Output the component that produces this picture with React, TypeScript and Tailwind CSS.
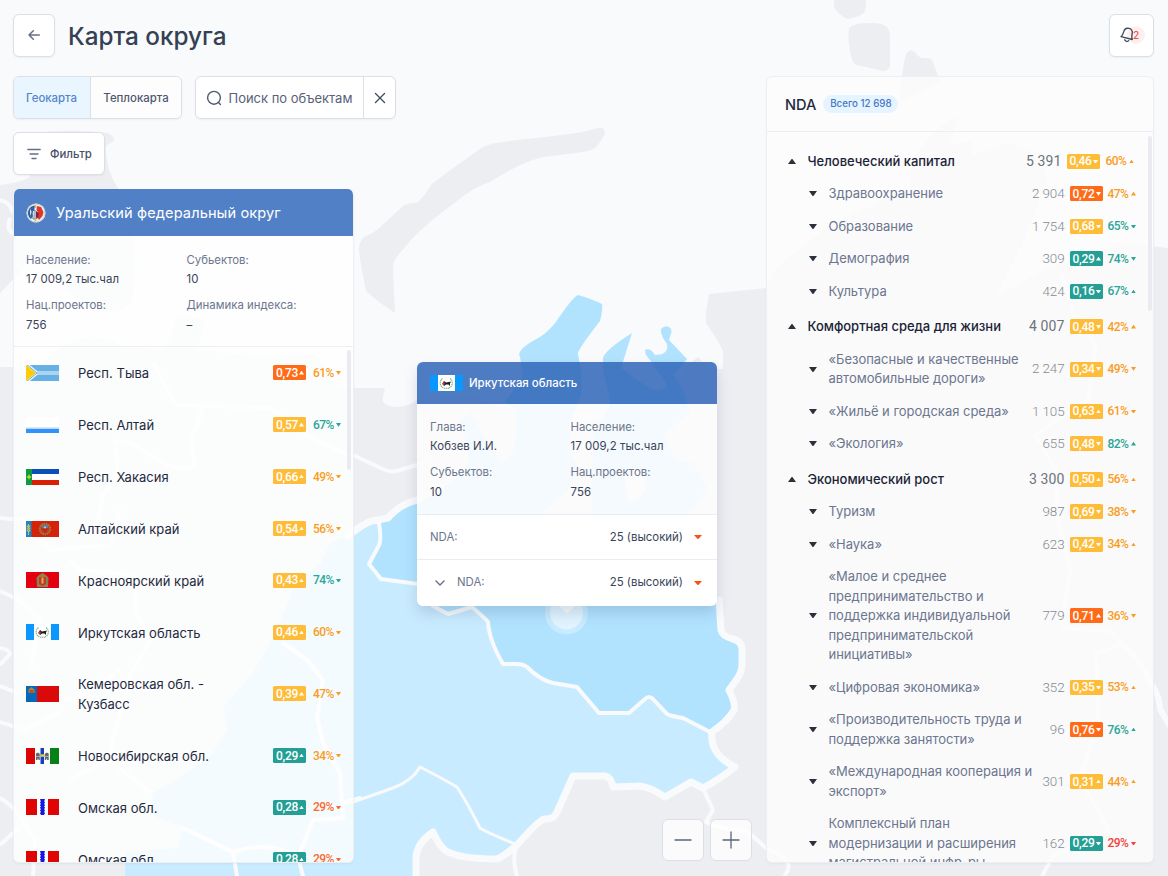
import React from "react";

type Tone = "red" | "amber" | "teal" | "orange" | "crimson";

const badgeBg: Record<string, string> = {
  red: "bg-[#ff6b18]",
  amber: "bg-[#ffbc38]",
  teal: "bg-[#239f96]",
};
const pctColor: Record<string, string> = {
  amber: "text-[#f99d22]",
  teal: "text-[#2ba598]",
  orange: "text-[#fb6a2b]",
  crimson: "text-[#f2443a]",
};

function Tri({ up, className }: { up: boolean; className?: string }) {
  return (
    <svg viewBox="0 0 10 6" preserveAspectRatio="none" className={className} fill="currentColor">
      {up ? <path d="M0 6 4.500 0h1L10 6z" /> : <path d="M0 0h10L5.500 6h-1z" />}
    </svg>
  );
}

function Metrics({ v, vt, vu, p, pt, pu }: { v: string; vt: Tone; vu: boolean; p: string; pt: Tone; pu: boolean }) {
  return (
    <>
      <span className={`flex h-[15px] w-[33px] shrink-0 items-center justify-between rounded-[1.500px] pl-[3px] pr-[2px] font-[Roboto] text-[12px] font-medium leading-none tracking-[-0.3px] text-white ${badgeBg[vt]}`}>
        {v}
        <Tri up={vu} className="h-[3.500px] w-[5px]" />
      </span>
      <span className={`flex h-[15px] w-[28px] shrink-0 items-center justify-between font-[Roboto] text-[12px] font-medium leading-none tracking-[-0.6px] ${pctColor[pt]}`}>
        {p}
        <Tri up={pu} className="h-[3.500px] w-[5px]" />
      </span>
    </>
  );
}

function IrkutskFlag() {
  return (
    <svg viewBox="0 0 33 16" className="block h-[16px] w-[33px]">
      <path fill="#fff" d="M0 0h33v16H0z" />
      <path fill="#0a98ff" d="M0 0h8v16H0zM25 0h8v16h-8z" />
      <path d="M12.500 3.500C9 6 9.500 11 13.500 13M20 3.500C23.500 6 23 11 19 13M14 13.200h5" fill="none" stroke="#77b781" strokeWidth="1.100" strokeDasharray="1.500 .5" />
      <path d="M12.500 8.500 14 6l2 1.500 3-.5 2-.5-1 2v2.500l-1.500-1.500h-2.500L14 11z" fill="#1c1c22" />
      <path d="m12 9 1.500-2 1.500 1-1 2.500z" fill="#d8323a" />
    </svg>
  );
}

function Flag({ id }: { id: string }) {
  if (id === "irk") return <IrkutskFlag />;
  return (
    <svg viewBox="0 0 33 16" className="block h-[16px] w-[33px]">
      {id === "tyva" && (
        <>
          <path fill="#65b0e4" d="M0 0h33v16H0z" />
          <path d="m0-1 11 9L0 17M11 8h22" fill="none" stroke="#f3f8fb" strokeWidth="3.200" />
          <path d="m0-1 11 9L0 17M11 8h22" fill="none" stroke="#65b0e4" strokeWidth="1" />
          <path fill="#ffcb05" d="M0 0v16l10-8z" />
        </>
      )}
      {id === "altai" && (
        <>
          <path fill="#fff" d="M0 0h33v16H0z" />
          <path fill="#b6d8fb" d="M0 10.500h33V12H0z" />
          <path fill="#3192fb" d="M0 12h33v4H0z" />
        </>
      )}
      {id === "khak" && (
        <>
          <path fill="#fff" d="M0 0h33v16H0z" />
          <path fill="#0b50b8" d="M6 0h27v5H6z" />
          <path fill="#d81e05" d="M6 11h27v5H6z" />
          <path fill="#109a44" d="M0 0h6v16H0z" />
          <path fill="#b7d929" d="m3 5 .8 1.800L5.700 8l-1.900 1.200L3 11l-.8-1.800L.3 8l1.900-1.200z" />
        </>
      )}
      {id === "altk" && (
        <>
          <path fill="#d52209" d="M0 0h33v16H0z" />
          <path fill="#1c83c8" d="M0 0h5.500v16H0z" />
          <path d="M2.500 3v11M1.300 4.500v6M3.700 4.500v6" stroke="#d9cb4c" strokeWidth="1.100" strokeDasharray="1.800 .5" />
          <circle cx="19" cy="8" r="5.300" fill="#c63a22" stroke="#8c8648" strokeWidth="1.800" strokeDasharray="1.600 .7" />
          <path fill="#5d7fa8" d="M16 4h6v3h-6z" />
          <path fill="#b8281b" d="M16 7.500h6L19 12z" />
          <circle cx="19" cy="6.500" r="1.100" fill="#d7c2ad" />
        </>
      )}
      {id === "krsn" && (
        <>
          <path fill="#e3000f" d="M0 0h33v16H0z" />
          <path fill="#8f8741" d="M10.500 6 12 4l2-1.500L16.500 1 19 2.500 21 4l1.500 2-.5 9h-11z" />
          <path fill="#c7362c" d="M13 5h7v7l-3.500 2-3.500-2z" />
          <path fill="#d9b348" d="M15.500 5.500h2v6h-2z" />
          <path d="M11.500 7v6M21.500 7v6M13 14.700h7" stroke="#4689a8" strokeWidth="1" strokeDasharray="1.300 1" />
        </>
      )}
      {id === "kem" && (
        <>
          <path fill="#db0a0a" d="M0 0h33v16H0z" />
          <path fill="#0668b8" d="M0 0h11v16H0z" />
          <path fill="#9b8a48" d="M2.500 3.500 5.500 1l3 2.500V7h-6z" />
          <path fill="#d2451e" d="M3.500 4h4v3h-4z" />
        </>
      )}
      {id === "nov" && (
        <>
          <path fill="#fff" d="M0 0h33v16H0z" />
          <path fill="#dc0505" d="M0 0h9v16H0z" />
          <path fill="#078015" d="M24 0h9v16h-9z" />
          <path fill="#1540b7" d="M14.500 0H18v16h-3.500z" />
          <path fill="#62686b" d="M10 5.500 12 4.500 13.800 6v6h-1.300l-.5-2-.7 2H10zM22.700 5.500l-2-1L18.800 6v6h1.300l.5-2 .7 2h1.400z" />
          <path d="M10 8.500h13" stroke="#b9bec4" strokeWidth=".8" />
          <path fill="#e4c742" d="M14.500 6.300h4v2h-4z" />
        </>
      )}
      {id === "omsk" && (
        <>
          <path fill="#fff" d="M0 0h33v16H0z" />
          <path fill="#e00505" d="M0 0h11v16H0zM22 0h11v16H22z" />
          <path d="M16.500 0v16" stroke="#1715e8" strokeWidth="3.400" />
          <path d="M16.500 0v16" stroke="#1715e8" strokeWidth="4.600" strokeDasharray="1.500 1.200" />
        </>
      )}
    </svg>
  );
}

const regions: { f: string; n: string; v: string; vt: Tone; p: string; pt: Tone }[] = [
  { f: "tyva", n: "Респ. Тыва", v: "0,73", vt: "red", p: "61%", pt: "amber" },
  { f: "altai", n: "Респ. Алтай", v: "0,57", vt: "amber", p: "67%", pt: "teal" },
  { f: "khak", n: "Респ. Хакасия", v: "0,66", vt: "amber", p: "49%", pt: "amber" },
  { f: "altk", n: "Алтайский край", v: "0,54", vt: "amber", p: "56%", pt: "amber" },
  { f: "krsn", n: "Красноярский край", v: "0,43", vt: "amber", p: "74%", pt: "teal" },
  { f: "irk", n: "Иркутская область", v: "0,46", vt: "amber", p: "60%", pt: "amber" },
  { f: "kem", n: "Кемеровская обл. -\nКузбасс", v: "0,39", vt: "amber", p: "47%", pt: "amber" },
  { f: "nov", n: "Новосибирская обл.", v: "0,29", vt: "teal", p: "34%", pt: "amber" },
  { f: "omsk", n: "Омская обл.", v: "0,28", vt: "teal", p: "29%", pt: "orange" },
  { f: "omsk", n: "Омская обл.", v: "0,28", vt: "teal", p: "29%", pt: "orange" },
];

type Row = [string, string, string, Tone, boolean, string, Tone, boolean];
const groups: { head: Row; items: Row[] }[] = [
  {
    head: ["Человеческий капитал", "5 391", "0,46", "amber", false, "60%", "amber", true],
    items: [
      ["Здравоохранение", "2 904", "0,72", "red", false, "47%", "amber", true],
      ["Образование", "1 754", "0,68", "amber", false, "65%", "teal", false],
      ["Демография", "309", "0,29", "teal", true, "74%", "teal", false],
      ["Культура", "424", "0,16", "teal", false, "67%", "teal", true],
    ],
  },
  {
    head: ["Комфортная среда для жизни", "4 007", "0,48", "amber", false, "42%", "amber", true],
    items: [
      ["«Безопасные и качественные\nавтомобильные дороги»", "2 247", "0,34", "amber", false, "49%", "amber", false],
      ["«Жильё и городская среда»", "1 105", "0,63", "amber", true, "61%", "amber", false],
      ["«Экология»", "655", "0,48", "amber", false, "82%", "teal", true],
    ],
  },
  {
    head: ["Экономический рост", "3 300", "0,50", "amber", true, "56%", "amber", true],
    items: [
      ["Туризм", "987", "0,69", "amber", false, "38%", "amber", false],
      ["«Наука»", "623", "0,42", "amber", false, "34%", "amber", true],
      ["«Малое и среднее\nпредпринимательство и\nподдержка индивидуальной\nпредпринимательской\nинициативы»", "779", "0,71", "red", true, "36%", "amber", false],
      ["«Цифровая экономика»", "352", "0,35", "amber", false, "53%", "amber", true],
      ["«Производительность труда и\nподдержка занятости»", "96", "0,76", "red", false, "76%", "teal", true],
      ["«Международная кооперация и\nэкспорт»", "301", "0,31", "amber", true, "44%", "amber", true],
      ["Комплексный план\nмодернизации и расширения\nмагистральной инфр-ры", "162", "0,29", "teal", false, "29%", "crimson", false],
    ],
  },
];

function GroupHead({ r, first }: { r: Row; first: boolean }) {
  return (
    <div className="flex h-[32.5px] items-center">
      <Tri up className="ml-[20.500px] h-[5px] w-[8px] text-[#2b3138]" />
      <span className="ml-[12px] whitespace-nowrap text-[13px] font-medium tracking-[-0.02px] text-[#1b2336]">{r[0]}</span>
      <span className="ml-auto mr-[5px] font-[Roboto] text-[14px] tracking-[0.1px] text-[#6d737d]">{r[1]}</span>
      <span className={`flex ${first ? "mr-[19.500px] gap-[6px]" : "mr-[17.500px] gap-[5px]"}`}>
        <Metrics v={r[2]} vt={r[3]} vu={r[4]} p={r[5]} pt={r[6]} pu={r[7]} />
      </span>
    </div>
  );
}

function GroupItem({ r }: { r: Row }) {
  return (
    <div className="flex items-center py-[6.5px]">
      <Tri up={false} className="ml-[41.500px] h-[5px] w-[8px] text-[#2b3138]" />
      <span className="ml-[12px] whitespace-pre text-[13px] leading-[19.5px] tracking-[-0.02px] text-[#6c768e]">{r[0]}</span>
      <span className="ml-auto mr-[5px] font-[Roboto] text-[13.400px] font-light leading-none tracking-[-0.1px] text-[#858b94]">{r[1]}</span>
      <span className="mr-[17.500px] flex gap-[5px]">
        <Metrics v={r[2]} vt={r[3]} vu={r[4]} p={r[5]} pt={r[6]} pu={r[7]} />
      </span>
    </div>
  );
}

function Field({ label, value }: { label: string; value: string }) {
  return (
    <div className="text-[11.4px] leading-[19.5px]">
      <div className="text-[#6c768e]">{label}</div>
      <div className="tracking-[0.06px] text-[#3a4459]">{value}</div>
    </div>
  );
}

function MapCanvas() {
  return (
    <svg viewBox="0 0 1168 876" className="absolute inset-0 h-full w-full" fill="none">
      <g fill="#edeef2">
        <path d="M395 313 Q378 302 366 291 Q360 262 359 250 Q359 241 365 236 Q372 234 377 230 L403 206 Q407 203 416 203 Q420 202 432 184 Q444 174 483 147 Q490 143 510 141 Q545 137 570 134 Q584 132 598 128 Q605 127 605 133 Q602 141 595 148 Q590 151 583 152 L552 156 Q540 157 527 162 Q507 171 490 182 Q475 187 462 197 L430 222 Q412 237 396 258 Q393 262 393 270 Z" />
        <path d="M834 0 Q833 7 836 10 Q843 17 847 19 Q857 18 864 13 Q866 8 866 0Z" />
        <path d="M849 28 Q853 23 870 23 Q890 22 890 36 L890 67 Q888 71 883 71 L857 65 Q853 64 852 59 Q847 42 849 28Z" />
        <path d="M906 54 Q910 48 915 52 Q919 59 925 58 Q932 58 933 62 L940 82 L900 102 Q901 73 906 54Z" />
        <path d="M0 185 Q20 183 30 177 V140 Q35 131 60 131 Q85 130 108 133 Q118 139 111 143 Q104 145 106 152 Q107 172 118 188 Q135 220 135 250 Q136 280 132 300 Q122 314 105 312 Q75 306 52 270 Q36 242 22 270 L0 293Z" />
        <path d="M14 367 Q26 378 40 365 Q54 350 75 340 Q100 332 120 345 L165 350 L178 315 L205 320 L198 350 L260 357 L316 354 L334 384 L353 388 H385 Q382 400 383 402 Q389 407 397 407 Q410 406 417 400 L470 395 L560 430 L660 400 L688 365 L698 357 L708 369 H723 V352 Q723 348 706 323 Q705 314 709 294 L766 288 L777 267 L827 227 L910 187 L912 160 Q938 123 957 117 L950 145 L973 140 L972 155 L1007 143 L1040 153 L1047 180 L1027 233 L997 295 L1050 267 L1127 243 L1168 248 V876 H0 V367Z" />
      </g>

      <g stroke="#f9fafc" strokeWidth="4" strokeLinejoin="round">
        <path d="M0 200 Q10 202 13 213 M10 218 Q5 232 16 234" />
        <path d="M353 455 L385 470 Q393 473 400 470 L430 461" />
        <path d="M153 362 L175 405 L270 408 L310 437 L353 457" />
        <path d="M203 408 L191 440 L195 466 Q178 473 158 460 Q132 440 115 441 L118 475 L103 495 L98 522" />
        <path d="M0 518 L22 520 L50 550 L110 545 L120 510" />
        <path d="M0 591 Q24 600 40 620 L30 670 M70 560 L80 570 L135 575 V610" />
        <path d="M0 648 Q10 650 10 654 L0 665 M0 686 L15 692 L75 700 L120 670 M0 722 L25 730 L60 712 M0 798 Q14 806 22 820 L35 840 L33 876 M22 825 L0 845" />
        <path d="M135 610 L150 640 L130 675 L118 720 L108 760 L70 780 M108 760 L152 793" />
        <path d="M703 788 L713 810 L706 822 Q718 829 747 831 L766 848 L782 856 Q794 865 784 876" />
        <path d="M1060 270 L1075 318 L1096 346 L1088 400 L1035 435 L1056 470 L1058 520 L1070 570 L1062 625" />
        <path d="M1062 628 L1110 631 L1122 644 L1096 654 L1098 720 L1080 780 L1098 810 L1108 830 L1053 856 L1042 876" />
        <path d="M1122 644 L1138 660 L1155 690 Q1160 700 1160 709 L1170 726" strokeWidth="6" />
        <path d="M517 845 Q511 858 518 880" />
      </g>

      <path
        d="M353 533 Q364 522 373 522 L385 520 L405 505 L430 500 L717 598 L720 634 Q740 638 742 647 Q743 665 738 679 L728 690 L734 710 L712 733 Q708 754 735 767 L703 788 L691 782 L664 797 L640 786 L613 787 L607 777 L573 776 L557 815 L542 820 L517 845 L497 859 L443 852 L432 832 L417 853 L415 876 H125 Q125 862 127 852 L177 848 L183 828 L150 814 L153 793 L187 773 L213 753 L227 730 L223 707 L253 673 L273 637 L287 605 L295 583 L320 565 L330 543Z"
        fill="#c9ebff"
      />
      <path
        d="M417 502 Q405 505 402 509 L390 520 L381 523 Q383 542 378 547 L370 564 L381 579 L418 584 L433 606 L448 614 L472 607 Q487 620 488 622 Q489 640 503 664 H517 Q523 664 527 667 Q540 680 553 683 L577 687 L599 713 H629 L645 699 Q649 695 653 699 L667 714 Q670 716 683 718 L712 733 L734 710 L728 690 L740 675 V647 L720 634 L717 598 L690 513 L707 488 L693 462 L677 462 L663 435 L690 412 L685 395 L674 375 L687 359 L669 340 Q672 333 670 328 Q665 325 661 329 Q660 335 667 344 Q669 355 655 355 Q650 347 645 350 Q645 355 650 360 L667 385 Q660 397 640 382 L621 368 L632 333 Q605 350 603 358 V370 L609 395 L610 405 L593 432 L592 513 L542 513 L570 488 L577 465 L570 452 V422 L581 395 L582 375 L578 354 Q576 352 600 321 Q603 309 602 304 Q592 299 578 295 Q574 296 560 316 Q551 330 540 337 Q515 350 520 357 L523 377 L505 402 L516 410 L517 438 L513 452 L502 463 L490 448 L470 412 L460 422 L468 445 V465 L453 482Z"
        fill="#b1e3ff"
      />
      <circle cx="666.500" cy="331.500" r="5" fill="#b1e3ff" />
      <path d="M623 468 Q640 465 646 480 Q646 500 628 501Z" fill="#f9fafc" />

      <g stroke="#f9fafc" strokeLinejoin="round" strokeLinecap="round">
        <path
          strokeWidth="4"
          d="M379 523 Q382 542 378 547 L369 564 L381 579 L418 584 L433 606 L448 614 L472 607 Q487 620 488 622 Q489 640 503 664 H517 Q523 664 527 667 Q540 680 553 683 L577 687 L599 713 H629 L645 699 Q649 695 653 699 L667 714 Q670 716 683 718 L712 733"
        />
        <path strokeWidth="3" d="M353 802 L393 788 Q412 781 420 767 Q440 777 457 787 Q468 804 480 828 Q486 832 515 844" />
        <path strokeWidth="4" d="M283 643 L307 660 L323 680 L317 717 L323 743 L340 773 L342 803 L360 798 M342 803 L343 818 L313 820 L298 857 L303 876 M183 828 L233 852 L237 876 M233 852 Q270 840 298 857" />
        <path
          strokeWidth="7"
          d="M348 536 Q364 523 372 521 L388 518 Q400 504 417 500 L440 488 M719 600 L721 630 Q722 636 733 639 Q742 641 742 650 V664 Q742 672 737 679 L729 690 Q736 704 734 710 Q728 721 712 732 Q709 754 735 767 Q720 779 703 788 L691 782 L665 797 Q650 787 640 786 L613 787 Q611 777 605 776 L573 776 L557 812 Q554 820 544 819 Q538 821 517 845 Q503 857 497 859 Q460 859 446 851 Q439 846 433 832 Q417 843 416 857 L416 880"
        />
      </g>

      <circle cx="566.500" cy="613" r="21.500" fill="#fff" fillOpacity=".3" />
      <circle cx="566.500" cy="613" r="16.500" fill="#fff" fillOpacity=".45" />
      <path d="M560 605h14v2l-7 6.500-7-6.500z" fill="#fafcfe" />
    </svg>
  );
}

const control = "border border-[#dcdfe6] bg-white shadow-[0_1px_2px_rgba(40,50,80,0.06)]";

export default function App() {
  return (
    <div className="relative flex h-[876px] w-[1168px] justify-between overflow-hidden bg-[#f9fafc] pl-[13px] pr-[14px] pt-[14px] font-['Inter',sans-serif] text-[#3a4459]">
      <MapCanvas />

      <div className="relative flex h-[849px] w-[384px] flex-col">
        <header className="flex h-[43px] items-center">
          <button className={`flex h-[43px] w-[42px] items-center justify-center rounded-[6px] pb-px ${control}`}>
            <svg viewBox="0 0 14 14" className="h-[14px] w-[14px]" fill="none" stroke="#667085" strokeWidth="1.500" strokeLinecap="round" strokeLinejoin="round">
              <path d="M12.300 7H2.300M6.300 2.700 2 7l4.300 4.300" />
            </svg>
          </button>
          <h1 className="ml-[13px] whitespace-nowrap pt-px text-[24.300px] font-medium leading-none text-[#344054]">Карта округа</h1>
        </header>

        <div className="mt-[19px] flex h-[43px] shrink-0 gap-[13px]">
          <div className={`flex w-[169px] overflow-hidden rounded-[6px] text-[11.4px] font-medium ${control}`}>
            <button className="w-[77px] border-r border-[#dcdfe6] bg-[#eaf6ff] pr-px pt-[2px] text-[#5485cc]">Геокарта</button>
            <button className="flex-1 bg-[#fdfdfe] pt-[2px] text-[#4f596e]">Теплокарта</button>
          </div>
          <div className={`flex w-[201px] items-center rounded-[6px] ${control}`}>
            <svg viewBox="0 0 16 16" className="ml-[10px] h-[16px] w-[16px]" fill="none" stroke="#4f596e" strokeWidth="1.400" strokeLinecap="round">
              <circle cx="8" cy="7.800" r="6.400" />
              <path d="m12.600 12.600 1.800 1.800" />
            </svg>
            <span className="ml-[6.500px] whitespace-nowrap pt-[2px] text-[13px] tracking-[-0.02px] text-[#576177]">Поиск по объектам</span>
            <button className="ml-auto flex h-full w-[32px] items-center justify-center border-l border-[#dcdfe6]">
              <svg viewBox="0 0 12 12" className="h-[12px] w-[12px]" stroke="#3f495f" strokeWidth="1.300" strokeLinecap="round">
                <path d="m1.500 1.500 9 9M10.500 1.500l-9 9" />
              </svg>
            </button>
          </div>
        </div>

        <button className={`mt-[13px] flex h-[43px] w-[92px] shrink-0 items-center rounded-[6px] ${control}`}>
          <svg viewBox="0 0 14 12" className="ml-[13px] h-[12px] w-[14px]" fill="none" stroke="#667085" strokeWidth="1.300" strokeLinecap="round">
            <path d="M.8 1.500h12.400M3 6h8M5 10.500h4" />
          </svg>
          <span className="ml-[9px] pt-[2px] text-[11.4px] font-medium text-[#475168]">Фильтр</span>
        </button>

        <section className="relative mt-[14px] flex h-[674px] w-[341px] shrink-0 flex-col overflow-hidden rounded-[6px] border border-t-0 border-[#eef0f4] bg-white/80 shadow-[0_1px_2px_rgba(40,50,80,0.06)]">
          <div className="-mx-px flex h-[47px] shrink-0 items-center bg-[#5280c6] pl-[13px]">
            <svg viewBox="0 0 20 20" className="h-[20px] w-[20px]">
              <circle cx="10" cy="10" r="9.500" fill="#eef0f4" />
              <path d="M9 2.500A7.500 7.500 0 0 0 5 16l2-3-1-3 2-2z" fill="#2a62ad" />
              <path d="M4 5 6 9l-2 5M6.500 8 9 7v9H7z" fill="#dfeaf5" stroke="#39608e" strokeWidth=".7" />
              <path d="M11 3 15 4l2.500 5-1 4-3.500 4-2-4 1.500-3-2-3z" fill="#e0362e" />
              <path d="m10 8 3 2-1 5-2 1z" fill="#7a2940" />
              <path d="M9.500 2v3M9.500 14v4" stroke="#d9b84d" strokeWidth="1.500" />
              <circle cx="10" cy="10" r="9" fill="none" stroke="#c9ccb9" strokeWidth=".8" />
            </svg>
            <span className="ml-[10px] whitespace-nowrap pt-[2px] text-[14.6px] tracking-[0.1px] text-white">Уральский федеральный округ</span>
          </div>
          <div className="grid h-[111px] shrink-0 grid-cols-[160.5px_1fr] content-start gap-y-[6.500px] border-b border-[#edeff3] pl-[12px] pt-[14.500px]">
            <Field label="Население:" value="17 009,2 тыс.чал" />
            <Field label="Субьектов:" value="10" />
            <Field label="Нац.проектов:" value="756" />
            <Field label="Динамика индекса:" value="–" />
          </div>
          <div className="min-h-0 flex-1 overflow-hidden">
            {regions.map((r, i) => (
              <div key={i} className="flex items-center py-[16.200px] pl-[12px] pr-[12px]">
                <Flag id={r.f} />
                <span className="-mb-px ml-[19px] whitespace-pre pt-px text-[13px] leading-[19.5px] tracking-[0.03px] text-[#1f2a40]">{r.n}</span>
                <span className="ml-auto flex gap-[7px]">
                  <Metrics v={r.v} vt={r.vt} vu p={r.p} pt={r.pt} pu={false} />
                </span>
              </div>
            ))}
          </div>
          <div className="absolute right-[2px] top-[161px] h-[120px] w-[4px] rounded-full bg-[#e9ebf0]" />
        </section>
      </div>

      <div className="relative flex w-[389px] flex-col items-end">
        <button className={`flex h-[43px] w-[45px] shrink-0 items-center rounded-[6px] pb-px ${control}`}>
          <span className="relative ml-[10px] flex h-[18px] w-[28px] items-center">
            <span className="absolute left-[7px] flex h-[18px] w-[18px] items-center justify-center rounded-full bg-[#feefef] text-[10px] font-medium text-[#f0524c]">2</span>
            <svg viewBox="0 0 16 16" className="relative h-[15.500px] w-[15.500px]" fill="none" stroke="#3f495f" strokeWidth="1.400" strokeLinecap="round" strokeLinejoin="round">
              <path d="M1 10C2.800 8.500 3.100 7.400 3.800 5.100 4.600 2.100 6.800.9 9.400 1.500c2.800.6 3.700 3 3.100 5.700-.5 2.200-.6 3.400.2 5.700z" />
              <path d="M4.800 13.200c.8 1.800 3 2.200 4.200.9" />
            </svg>
          </span>
        </button>

        <section className="relative mt-[19px] flex h-[787px] w-[388px] flex-col overflow-hidden rounded-[6px] border border-[#edeff3] bg-[#fdfdfd]/80 shadow-[0_1px_2px_rgba(40,50,80,0.05)]">
          <div className="flex h-[55px] shrink-0 items-center border-b border-[#edeff3] pl-[18px]">
            <span className="pt-[3px] text-[14.6px] font-medium text-[#1f2a40]">NDA</span>
            <span className="ml-[7px] flex h-[18px] w-[75px] items-center justify-center whitespace-nowrap rounded-full bg-[#e6f4ff] text-[9.750px] font-medium text-[#4677c4]">Всего 12 698</span>
          </div>
          <div className="min-h-0 flex-1 overflow-hidden pt-[13.200px]">
            {groups.map((g, i) => (
              <div key={i} className="mb-[3px]">
                <GroupHead r={g.head} first={i === 0} />
                {g.items.map((r) => (
                  <GroupItem key={r[0]} r={r} />
                ))}
              </div>
            ))}
          </div>
          <div className="absolute right-[1px] top-[59px] h-[175px] w-[4px] rounded-full bg-[#e9ebf0]" />
        </section>
      </div>

      <div className="absolute left-[417px] top-[362px] flex h-[244px] w-[300px] flex-col overflow-hidden rounded-[6px] shadow-[0_8px_14px_rgba(40,60,100,0.16)]">
        <div className="flex h-[42px] items-center bg-[#3065b8]/85 pl-[13px]">
          <IrkutskFlag />
          <span className="ml-[6px] pt-[2px] text-[11.4px] font-medium text-white">Иркутская область</span>
        </div>
        <div className="grid h-[111px] grid-cols-[140.5px_1fr] content-start gap-y-[6.500px] border-b border-[#e9ecf1] bg-[#fcfcfd]/90 pl-[13px] pt-[13.600px]">
          <Field label="Глава:" value="Кобзев И.И." />
          <Field label="Население:" value="17 009,2 тыс.чал" />
          <Field label="Субьектов:" value="10" />
          <Field label="Нац.проектов:" value="756" />
        </div>
        <div className="flex h-[45px] items-center border-b border-[#e9ecf1] bg-white pl-[13px] pr-[15px] text-[11.4px]">
          <span className="pt-[2px] text-[#6c768e]">NDA:</span>
          <span className="ml-auto pt-[2px] text-[#3a4459]">25 (высокий)</span>
          <Tri up={false} className="ml-[11px] h-[4px] w-[8px] text-[#ff4f12]" />
        </div>
        <div className="flex flex-1 items-center bg-white pb-px pl-[18px] pr-[15px] text-[11.4px]">
          <svg viewBox="0 0 10 6" className="h-[6px] w-[10px]" fill="none" stroke="#667085" strokeWidth="1.400" strokeLinecap="round" strokeLinejoin="round">
            <path d="m1 1 4 4 4-4" />
          </svg>
          <span className="ml-[12px] text-[#6c768e]">NDA:</span>
          <span className="ml-auto text-[#3a4459]">25 (высокий)</span>
          <Tri up={false} className="ml-[11px] h-[4px] w-[8px] text-[#ff4f12]" />
        </div>
      </div>

      <div className="absolute bottom-[15px] left-[662px] flex gap-[6px]">
        {["M1 9h16", "M1 9h16M9 1v16"].map((d) => (
          <button key={d} className="flex h-[42px] w-[42px] items-center justify-center rounded-[6px] border border-[#dcdfe6] bg-white/75">
            <svg viewBox="0 0 18 18" className="h-[18px] w-[18px] shrink-0" stroke="#5b667d" strokeWidth="1.300" strokeLinecap="round">
              <path d={d} />
            </svg>
          </button>
        ))}
      </div>
    </div>
  );
}
